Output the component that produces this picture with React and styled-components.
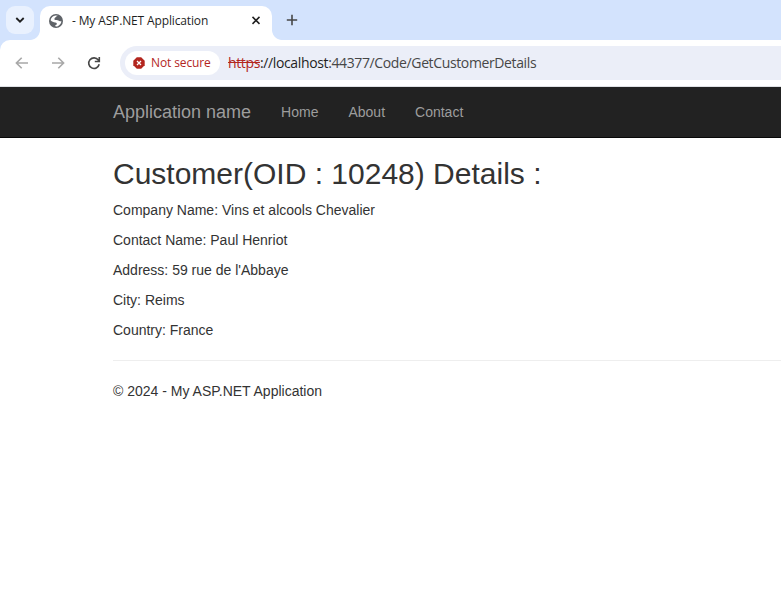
import React from "react";
import styled, { createGlobalStyle } from "styled-components";

const GlobalStyle = createGlobalStyle`
  * { box-sizing: border-box; }
  html, body { margin: 0; height: 100%; background: #fff; overflow: hidden; }
  body { font: 14px/20px "Liberation Sans", Arial, sans-serif; color: #333; }
  svg { display: block; flex: none; }
`;

const Window = styled.div`
  width: 781px;
  height: 609px;
  display: flex;
  flex-direction: column;
  overflow: hidden;
`;

const TabStrip = styled.div`
  height: 40px;
  flex: none;
  display: flex;
  align-items: flex-start;
  padding: 6px 0 0 6px;
  background: #d3e3fd;
`;

const TabSearch = styled.button`
  width: 28px;
  height: 28px;
  margin: 0;
  padding: 0;
  border: 0;
  border-radius: 9px;
  background: #e9f1fe;
  display: grid;
  place-items: center;
`;

const Tab = styled.div`
  position: relative;
  width: 232px;
  height: 34px;
  margin-left: 6px;
  padding: 0 9px;
  display: flex;
  align-items: center;
  border-radius: 10px 10px 0 0;
  background: #fff;

  &::before,
  &::after {
    content: "";
    position: absolute;
    bottom: 0;
    width: 10px;
    height: 10px;
  }
  &::before {
    left: -10px;
    background: radial-gradient(circle at 0 0, transparent 9.5px, #fff 10.3px);
  }
  &::after {
    right: -10px;
    background: radial-gradient(circle at 100% 0, transparent 9.5px, #fff 10.3px);
  }
`;

const TabTitle = styled.span`
  flex: 1;
  margin: -4px 0 0 9px;
  font: 12px/16px "Open Sans", "Segoe UI", sans-serif;
  letter-spacing: -0.14px;
  white-space: nowrap;
  color: #1f1f1f;
`;

const TabIcon = styled.span`
  margin-top: -5px;
`;

const NewTab = styled.span`
  margin: 8px 0 0 14px;
`;

const Toolbar = styled.div`
  height: 47px;
  flex: none;
  display: flex;
  align-items: center;
  padding: 0 0 0 14px;
  border-bottom: 1px solid #dfe1e5;
  border-radius: 10px 0 0 0;
  background: #fff;
`;

const Chrome = styled.div`
  flex: none;
  background: linear-gradient(#d3e3fd 60px, #fff 60px);
`;

const NavIcons = styled.div`
  width: 106px;
  display: flex;
  gap: 20px;
`;

const AddressBar = styled.div`
  flex: 1;
  height: 34px;
  padding-left: 5px;
  display: flex;
  align-items: center;
  border-radius: 17px 0 0 17px;
  background: #ebeef8;
`;

const SecurityChip = styled.div`
  width: 95px;
  height: 24px;
  padding-left: 8px;
  display: flex;
  align-items: center;
  gap: 6px;
  border-radius: 12px;
  background: #fff;
  color: #b3261e;
  font: 500 12px/16px "Open Sans", "Segoe UI", sans-serif;
  letter-spacing: -0.12px;
  white-space: nowrap;
`;

const Url = styled.span`
  margin-left: 8px;
  font: 14px/20px "Open Sans", "Segoe UI", sans-serif;
  letter-spacing: -0.37px;
  white-space: nowrap;
  color: #474747;
`;

const Scheme = styled.s`
  color: #b3261e;
`;

const Host = styled.span`
  color: #1f1f1f;
`;

const Navbar = styled.nav`
  height: 51px;
  flex: none;
  padding-left: 113px;
  display: flex;
  align-items: center;
  gap: 30px;
  border-bottom: 1px solid #080808;
  background: #222;
  color: #9d9d9d;
`;

const Brand = styled.span`
  font-size: 18px;
`;

const Content = styled.main`
  padding: 19px 0 0 113px;
`;

const Heading = styled.h2`
  margin: 0 0 10px;
  font-size: 30px;
  font-weight: 500;
  line-height: 33px;
`;

const Detail = styled.p`
  margin: 0 0 10px;
`;

const Rule = styled.hr`
  margin: 20px 0;
  border: 0;
  border-top: 1px solid #eee;
`;

function ChevronIcon() {
  return (
    <svg width="10" height="8" viewBox="0 0 10 8" fill="none" stroke="#1f1f1f" strokeWidth="1.8">
      <path d="M1.3 2 5 5.7 8.7 2" />
    </svg>
  );
}

function GlobeIcon() {
  return (
    <svg width="14" height="14" viewBox="0 0 14 14">
      <circle cx="7" cy="7" r="7" fill="#5f6368" />
      <path
        d="M8.6 1.6C8.3 3 7.6 3.3 6.4 3.4 5.9 4.4 5.3 4.8 5.6 5.7c1.2.3 2.9-.1 3.8.9.5.7 1.5.8 3 .6-.2 2-1.4 3.8-3.2 4.7-.9.5-2 .6-3 .4.1-1.2.6-1.4 1.6-1.7.2-1.4-.3-2.1-1.5-2.2C4.4 8.3 3 7.5 1.6 6.2 1.9 3.6 4 1.6 6.6 1.5z"
        fill="#fff"
      />
      <path d="M7.8 1.5 7.1 3.2l-1.5.9.2 1.2 2.4.1 1.2-1.8 1.3-.3L9.6 2z" fill="#5f6368" />
    </svg>
  );
}

function CloseIcon() {
  return (
    <svg width="14" height="14" viewBox="0 0 14 14" fill="none" stroke="#1f1f1f" strokeWidth="1.5">
      <path d="m3.5 2.9 7 7m0-7-7 7" />
    </svg>
  );
}

function PlusIcon() {
  return (
    <svg width="12" height="12" viewBox="0 0 12 12" fill="none" stroke="#474747" strokeWidth="1.6">
      <path d="M6 .8v10.4M.8 6h10.4" />
    </svg>
  );
}

function ArrowIcon({ forward }) {
  return (
    <svg width="16" height="16" viewBox="0 0 16 16" fill="none" stroke="#a8a8a8" strokeWidth="1.6">
      <path d={forward ? "M2 8h11M8.3 2.7 13.6 8l-5.3 5.3" : "M14 8H3M7.7 2.7 2.4 8l5.3 5.3"} />
    </svg>
  );
}

function ReloadIcon() {
  return (
    <svg width="16" height="16" viewBox="0 0 16 16" fill="none" stroke="#474747" strokeWidth="1.6">
      <path d="M13.2 9.3A5.3 5.3 0 1 1 12.3 5L13.5 6.3M13.3 2v4.5H8.8" />
    </svg>
  );
}

function WarningIcon() {
  return (
    <svg width="12" height="12" viewBox="0 0 12 12">
      <path d="M3.8.3h4.4l3.5 3.5v4.4l-3.5 3.5H3.8L.3 8.2V3.8z" fill="#b3261e" />
      <path d="m4 4 4 4m0-4L4 8" stroke="#fff" strokeWidth="1.3" />
    </svg>
  );
}

const links = ["Home", "About", "Contact"];
const details = [
  "Company Name: Vins et alcools Chevalier",
  "Contact Name: Paul Henriot",
  "Address: 59 rue de l'Abbaye",
  "City: Reims",
  "Country: France",
];

export default function App() {
  return (
    <Window>
      <GlobalStyle />
      <Chrome>
        <TabStrip>
          <TabSearch aria-label="Search tabs"><ChevronIcon /></TabSearch>
          <Tab>
            <TabIcon><GlobeIcon /></TabIcon>
            <TabTitle>- My ASP.NET Application</TabTitle>
            <TabIcon><CloseIcon /></TabIcon>
          </Tab>
          <NewTab><PlusIcon /></NewTab>
        </TabStrip>
        <Toolbar>
          <NavIcons>
            <ArrowIcon />
            <ArrowIcon forward />
            <ReloadIcon />
          </NavIcons>
          <AddressBar>
            <SecurityChip><WarningIcon />Not secure</SecurityChip>
            <Url><Scheme>https</Scheme><Host>://localhost</Host>:44377/Code/GetCustomerDetails</Url>
          </AddressBar>
        </Toolbar>
      </Chrome>
      <Navbar>
        <Brand>Application name</Brand>
        {links.map((label) => <span key={label}>{label}</span>)}
      </Navbar>
      <Content>
        <Heading>Customer(OID : 10248) Details :</Heading>
        {details.map((text) => <Detail key={text}>{text}</Detail>)}
        <Rule />
        <Detail>© 2024 - My ASP.NET Application</Detail>
      </Content>
    </Window>
  );
}
